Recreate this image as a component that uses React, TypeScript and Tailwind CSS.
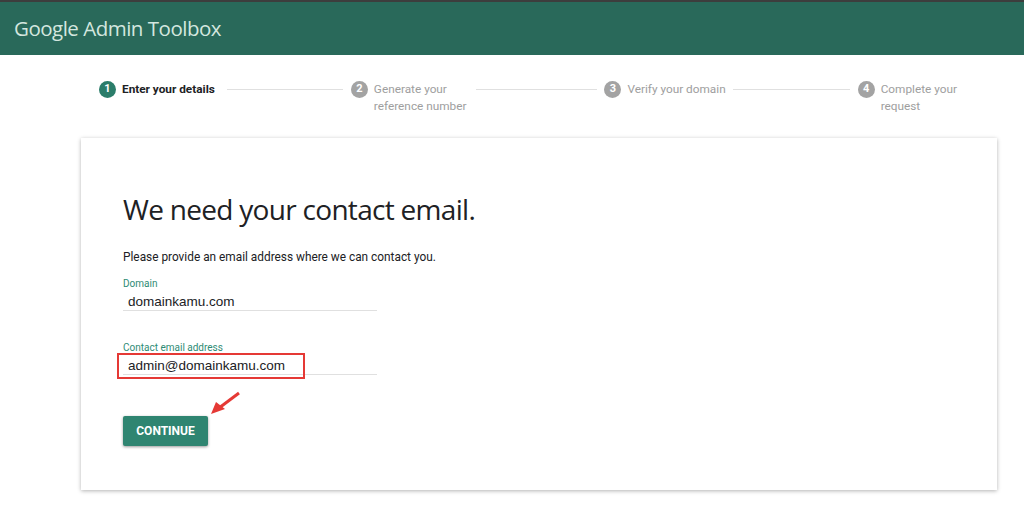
import React from "react";

interface Step {
  n: number;
  lines: string[];
  active?: boolean;
}

const steps: Step[] = [
  { n: 1, lines: ["Enter your details"], active: true },
  { n: 2, lines: ["Generate your", "reference number"] },
  { n: 3, lines: ["Verify your domain"] },
  { n: 4, lines: ["Complete your", "request"] },
];

function StepItem({ step }: { step: Step }) {
  return (
    <div className="flex items-start gap-[6px]">
      <div
        className={`w-[17px] h-[17px] rounded-full flex items-center justify-center text-white text-[11px] font-bold shrink-0 ${
          step.active ? "bg-[#2b7d6a]" : "bg-[#a3a3a3]"
        }`}
      >
        {step.n}
      </div>
      <div
        className={`text-[11.8px] leading-[17px] ${
          step.active ? "font-bold text-[#202124]" : "text-[#9e9e9e]"
        }`}
      >
        {step.lines.map((l) => (
          <div key={l}>{l}</div>
        ))}
      </div>
    </div>
  );
}

function Field({ label, value }: { label: string; value: string }) {
  return (
    <div className="w-[254px]">
      <div className="text-[10px] leading-[12px] text-[#2e8b74]">{label}</div>
      <div
        className="px-[5px] pt-[4px] text-[13.5px] leading-[16px] text-[#202124] border-b border-[#e0e0e0]"
        style={{ fontFamily: '"Liberation Sans", Arial, sans-serif' }}
      >
        {value}
      </div>
    </div>
  );
}

export default function App() {
  return (
    <div
      className="w-[1024px] h-[516px] bg-white overflow-hidden"
      style={{ fontFamily: 'Roboto, "Liberation Sans", sans-serif' }}
    >
      <header className="h-[55px] bg-[#29695a] border-t-2 border-[#3d3d3d] flex items-center px-[14px]">
        <span
          className="text-[20.5px] text-[#d3e6df] tracking-[-0.5px]"
          style={{ fontFamily: '"Open Sans", sans-serif' }}
        >
          Google Admin Toolbox
        </span>
      </header>

      <div className="flex items-start pl-[99px] pt-[26px]">
        <StepItem step={steps[0]} />
        <div className="w-[116px] h-px bg-[#e0e0e0] mt-[8px] ml-[12px] mr-[8px]" />
        <StepItem step={steps[1]} />
        <div className="w-[121px] h-px bg-[#e0e0e0] mt-[8px] ml-[10px] mr-[7px]" />
        <StepItem step={steps[2]} />
        <div className="w-[117px] h-px bg-[#e0e0e0] mt-[8px] ml-[7px] mr-[8px]" />
        <StepItem step={steps[3]} />
      </div>

      <div className="ml-[81px] mt-[23px] w-[916px] h-[352px] bg-white shadow-[0_1px_4px_rgba(0,0,0,0.3)] pl-[42px] pt-[53px]">
        <h1
          className="text-[28px] leading-[36px] text-[#202124] tracking-[-0.7px]"
          style={{ fontFamily: '"Open Sans", sans-serif' }}
        >
          We need your contact email.
        </h1>
        <p className="mt-[22px] text-[11.85px] leading-[16px] text-[#202124]">
          Please provide an email address where we can contact you.
        </p>
        <div className="mt-[13px]">
          <Field label="Domain" value="domainkamu.com" />
        </div>
        <div className="mt-[31px] relative">
          <Field label="Contact email address" value="admin@domainkamu.com" />
          <div className="absolute left-[-6px] top-[11px] w-[188px] h-[26px] border-2 border-[#e53935]" />
        </div>
        <div className="relative mt-[41px]">
          <button className="w-[85px] h-[30px] bg-[#2f8571] text-white text-[12px] font-bold rounded-[2px] shadow-[0_1px_3px_rgba(0,0,0,0.4)]">
            CONTINUE
          </button>
          <svg
            className="absolute left-[86px] top-[-25px]"
            width="34"
            height="26"
            viewBox="0 0 34 26"
          >
            <line x1="30" y1="2" x2="10" y2="17" stroke="#e53935" strokeWidth="3" />
            <polygon points="2,23 7,11 16,18" fill="#e53935" />
          </svg>
        </div>
      </div>
    </div>
  );
}
